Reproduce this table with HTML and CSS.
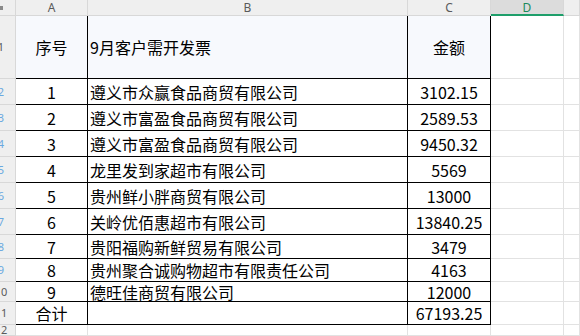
FILE: index.html
```html
<!DOCTYPE html>
<html lang="zh">
<head>
<meta charset="utf-8">
<link rel="stylesheet" href="styles.css">
</head>
<body>
<div class="sheet">
  <div class="ch corner"><span class="corner-mark"></span></div>
  <div class="ch">A</div>
  <div class="ch">B</div>
  <div class="ch">C</div>
  <div class="ch sel">D</div>
  <div class="ch"></div>

  <div class="rh"><span>1</span></div>
  <div class="c t head ctr">序号</div>
  <div class="c t head">9月客户需开发票</div>
  <div class="c t head ctr">金额</div>
  <div class="c"></div><div class="c"></div>

  <div class="rh blue"><span>2</span></div>
  <div class="c t ctr">1</div><div class="c t">遵义市众赢食品商贸有限公司</div><div class="c t ctr">3102.15</div>
  <div class="c"></div><div class="c"></div>

  <div class="rh blue"><span>3</span></div>
  <div class="c t ctr">2</div><div class="c t">遵义市富盈食品商贸有限公司</div><div class="c t ctr">2589.53</div>
  <div class="c"></div><div class="c"></div>

  <div class="rh blue"><span>4</span></div>
  <div class="c t ctr">3</div><div class="c t">遵义市富盈食品商贸有限公司</div><div class="c t ctr">9450.32</div>
  <div class="c"></div><div class="c"></div>

  <div class="rh blue"><span>5</span></div>
  <div class="c t ctr">4</div><div class="c t">龙里发到家超市有限公司</div><div class="c t ctr">5569</div>
  <div class="c"></div><div class="c"></div>

  <div class="rh blue"><span>6</span></div>
  <div class="c t ctr">5</div><div class="c t">贵州鲜小胖商贸有限公司</div><div class="c t ctr">13000</div>
  <div class="c"></div><div class="c"></div>

  <div class="rh blue"><span>7</span></div>
  <div class="c t ctr">6</div><div class="c t">关岭优佰惠超市有限公司</div><div class="c t ctr">13840.25</div>
  <div class="c"></div><div class="c"></div>

  <div class="rh blue"><span>8</span></div>
  <div class="c t ctr">7</div><div class="c t">贵阳福购新鲜贸易有限公司</div><div class="c t ctr">3479</div>
  <div class="c"></div><div class="c"></div>

  <div class="rh blue"><span>9</span></div>
  <div class="c t ctr">8</div><div class="c t">贵州聚合诚购物超市有限责任公司</div><div class="c t ctr">4163</div>
  <div class="c"></div><div class="c"></div>

  <div class="rh"><span>10</span></div>
  <div class="c t ctr">9</div><div class="c t">德旺佳商贸有限公司</div><div class="c t ctr">12000</div>
  <div class="c"></div><div class="c"></div>

  <div class="rh"><span>11</span></div>
  <div class="c t ctr">合计</div><div class="c t"></div><div class="c t ctr">67193.25</div>
  <div class="c"></div><div class="c"></div>

  <div class="rh"><span>12</span></div>
  <div class="c"></div><div class="c"></div><div class="c"></div>
  <div class="c"></div><div class="c"></div>
</div>
</body>
</html>
```

FILE: styles.css
```css
html, body {
  margin: 0;
  padding: 0;
  background: #ffffff;
}
body {
  width: 580px;
  height: 336px;
  overflow: hidden;
}
.sheet {
  display: grid;
  grid-template-columns: 16px 72px 320px 83px 73px 1fr;
  grid-template-rows: 16px 63px repeat(6, 26px) 24px 23px 20px 23px 1fr;
  width: 580px;
  height: 336px;
  font-family: "Noto Sans CJK SC", "Noto Sans", sans-serif;
}
.ch {
  box-sizing: border-box;
  background: #efefef;
  border-right: 1px solid #d8d8d8;
  border-bottom: 1px solid #d8d8d8;
  color: #5a5a5a;
  font-family: "Noto Sans", "Liberation Sans", sans-serif;
  font-size: 12px;
  line-height: 15px;
  text-align: center;
}
.ch.sel {
  background: #dcdcdc;
  color: #1b8a5a;
  border-bottom: 2px solid #1e9e6a;
}
.corner {
  position: relative;
}
.corner-mark {
  position: absolute;
  left: 0;
  top: 6px;
  width: 3px;
  height: 4px;
  background: #8a8a8a;
}
.rh {
  box-sizing: border-box;
  background: #efefef;
  border-right: 1px solid #d8d8d8;
  border-bottom: 1px solid #d8d8d8;
  overflow: hidden;
  display: flex;
  justify-content: flex-end;
  align-items: center;
  color: #5a5a5a;
  font-family: "Noto Sans", "Liberation Sans", sans-serif;
  font-size: 11px;
  line-height: 14px;
}
.rh span {
  flex-shrink: 0;
  width: 26px;
  margin-right: 1px;
  text-align: center;
}
.rh.blue {
  color: #6aa8e0;
}
.c {
  box-sizing: border-box;
  border-right: 1px solid #e2e2e2;
  border-bottom: 1px solid #e2e2e2;
  min-width: 0;
}
.c.t {
  border-right: 1px solid #000000;
  border-bottom: 1px solid #000000;
  display: flex;
  align-items: center;
  padding-left: 2px;
  font-size: 16px;
  line-height: 18px;
  color: #000000;
  white-space: nowrap;
}
.c.head {
  background: #f7f9fd;
}
.c.ctr {
  justify-content: center;
  padding-left: 0;
}
```
